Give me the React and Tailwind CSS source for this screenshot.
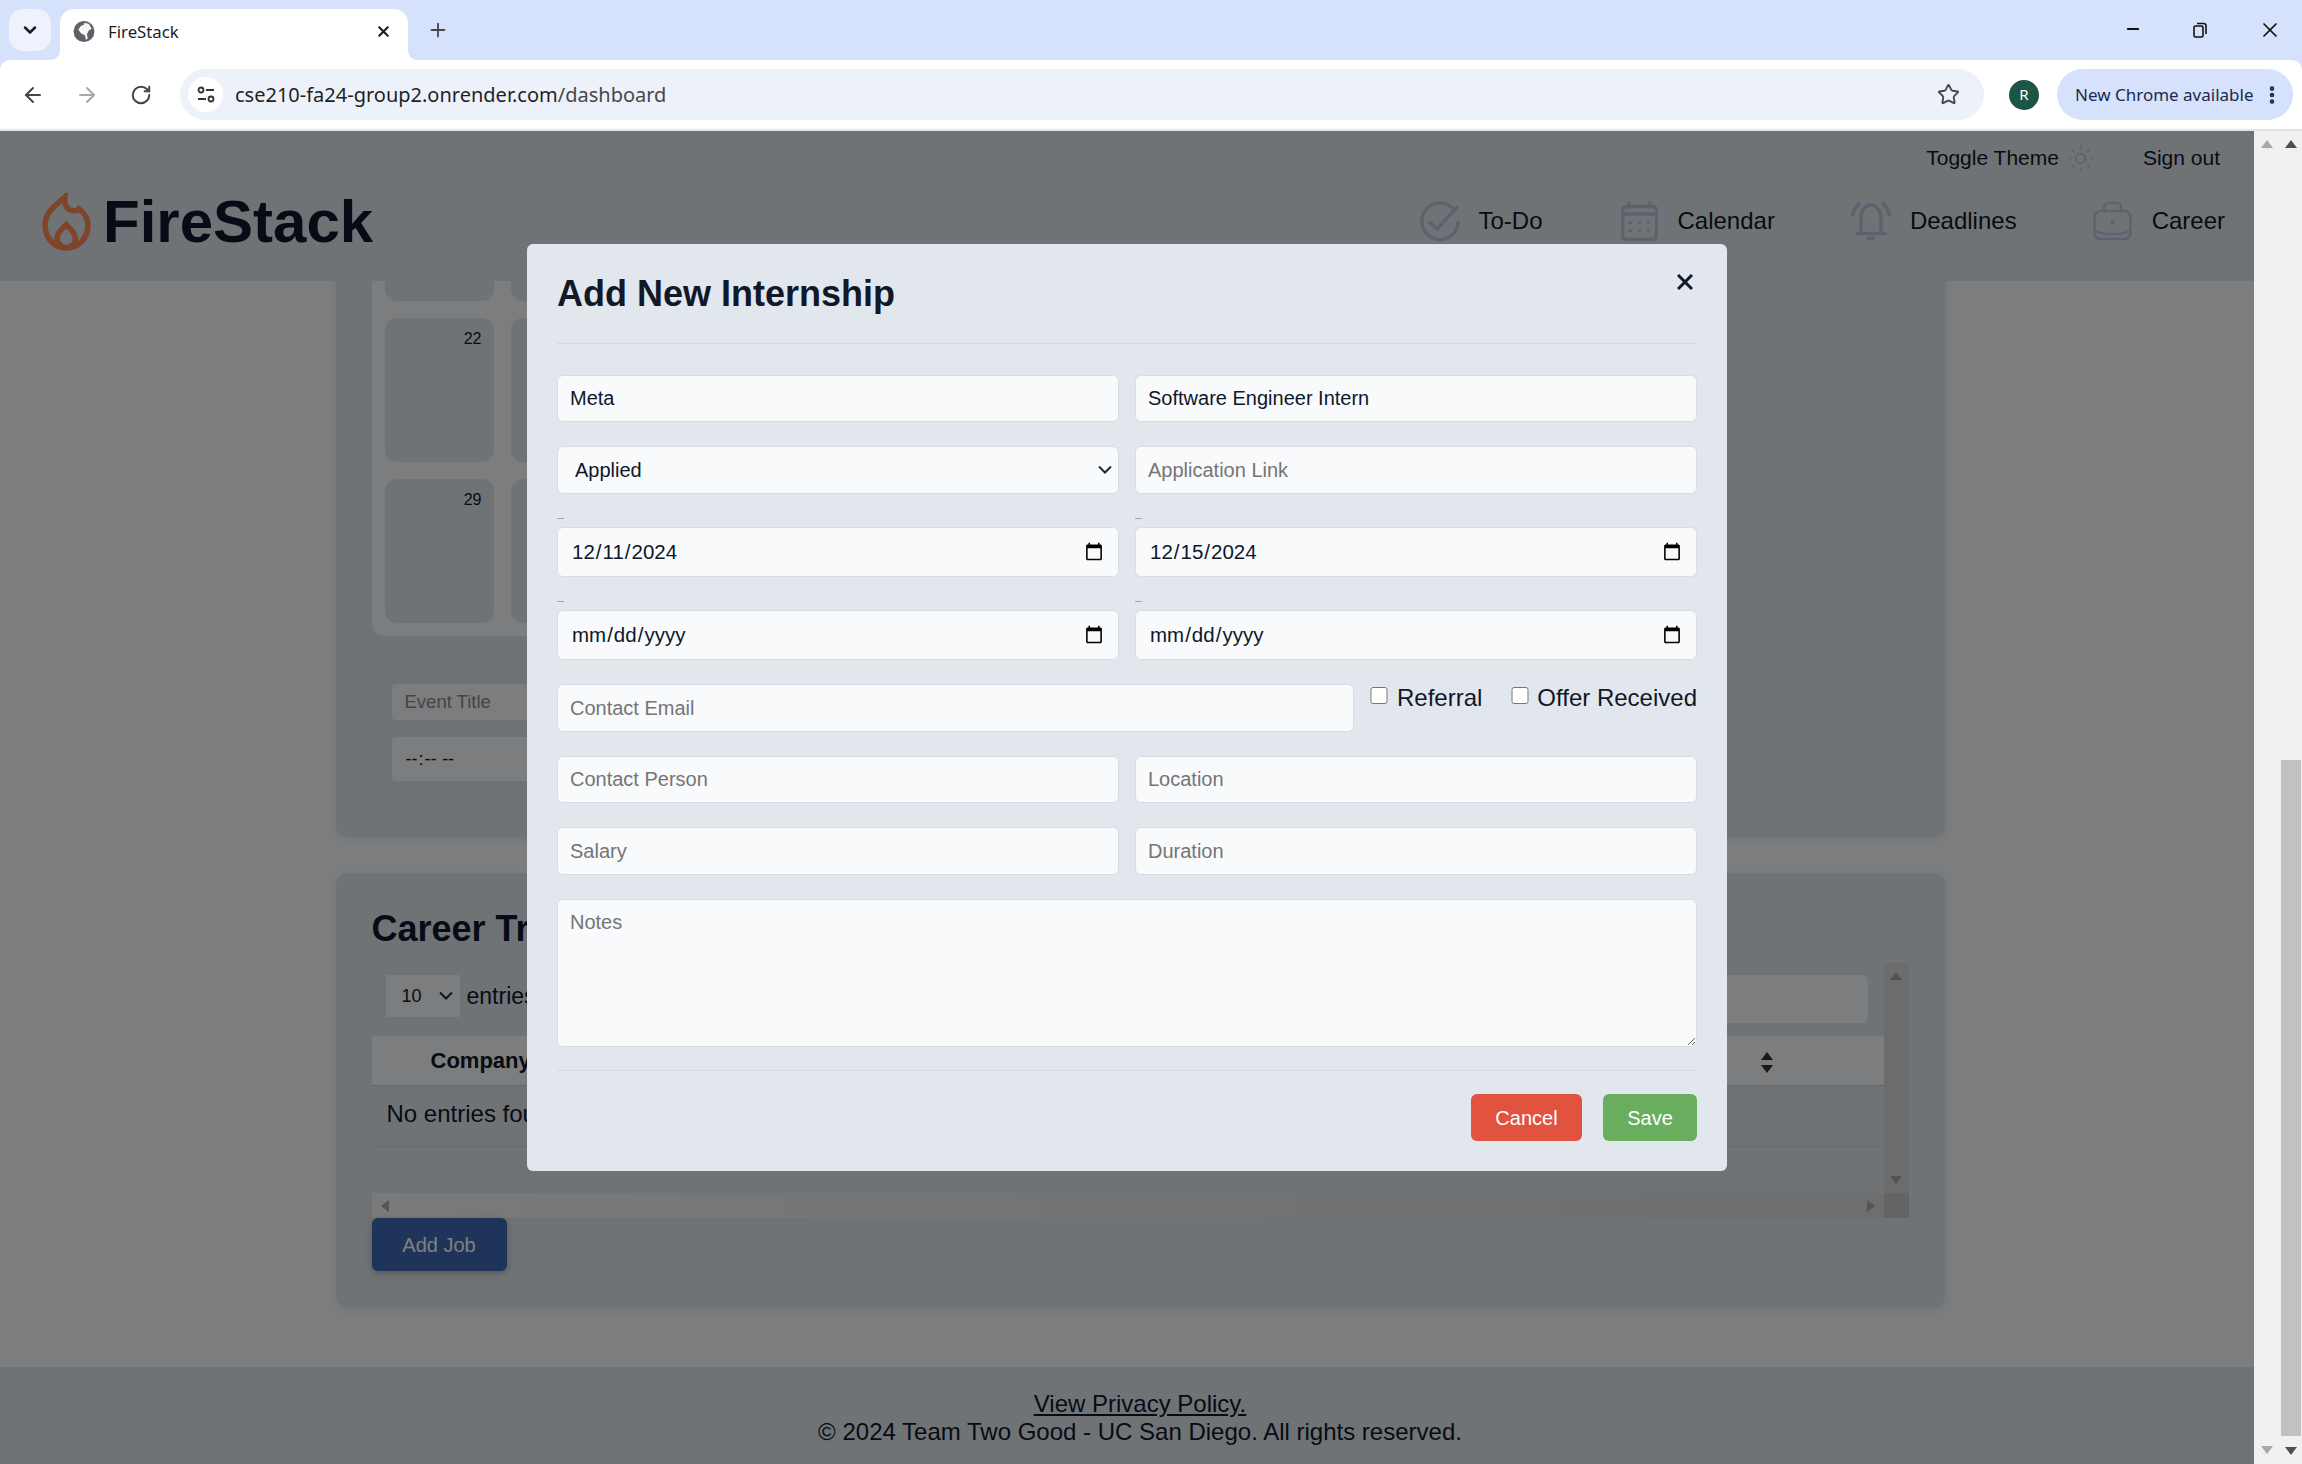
import React from 'react';
import { ArrowLeft, ArrowRight, ChevronDown, EllipsisVertical, Minus, Plus, RotateCw, Star, Sun, X } from 'lucide-react';

const sans = 'font-["Liberation_Sans",Arial,sans-serif]';
const chromeFont = 'font-["Noto_Sans",sans-serif]';
const field =
  'w-full rounded-md border border-[#d9dde2] bg-[#f8fafc] px-3 text-[20px] text-[#0f172a] placeholder:text-[#757575] outline-none';
const dateField =
  'h-[50px] w-full rounded-md border border-[#d9dde2] bg-[#f8fafc] pl-[13px] pr-3 text-[20.5px] text-[#0f172a] outline-none';
const navIcon = 'fill-none stroke-[#b8c4dc]';

// Triangulo das barras de rolagem
const Arrow = ({ rotate = '', color = 'fill-[#5c5c5c]', size = 'w-3 h-2' }) => (
  <svg viewBox="0 0 12 8" className={`${size} ${rotate} ${color}`}>
    <path d="M6 0l6 8H0z" />
  </svg>
);

const SelectChevron = () => (
  <svg viewBox="0 0 14 9" className="pointer-events-none absolute right-[7px] top-1/2 h-[9px] w-[14px] -translate-y-1/2 fill-none stroke-[#1f2937] stroke-2">
    <path d="M1 1l6 6 6-6" />
  </svg>
);

const BrowserChrome = () => (
  <div className={`${chromeFont} bg-[#d6e2fb]`}>
    {/* Abas */}
    <div className="flex h-[60px] items-start pt-[9px] pl-[9px]">
      <div className="flex h-[42px] w-[42px] items-center justify-center rounded-[14px] bg-[#edf2fc]">
        <ChevronDown size={20} strokeWidth={3} className="text-[#1f1f1f]" />
      </div>
      <div className="relative ml-[9px] flex h-[51px] w-[348px] items-center rounded-t-[14px] bg-white pb-[6px] pl-[13px] pr-[16px]">
        <svg viewBox="0 0 10 10" className="absolute bottom-0 left-[-10px] h-[10px] w-[10px] fill-white">
          <path d="M10 0v10H0c6 0 10-4 10-10z" />
        </svg>
        <svg viewBox="0 0 10 10" className="absolute bottom-0 right-[-10px] h-[10px] w-[10px] fill-white">
          <path d="M0 0v10h10C4 10 0 6 0 0z" />
        </svg>
        <svg viewBox="0 0 22 22" className="h-[21px] w-[22px]">
          <circle cx="11" cy="11" r="11" fill="#5f6368" />
          <path d="M11 2l5 1 3 5-3 2-2 4 1 4-2 2-1-5-4-2-3-4 3-4 3-1z" fill="#fff" opacity="0.95" />
        </svg>
        <span className="ml-[13px] text-[16.8px] text-[#1f1f1f]">FireStack</span>
        <X size={17} strokeWidth={3} className="ml-auto text-[#1f1f1f]" />
      </div>
      <Plus size={22} strokeWidth={2} className="ml-[19px] mt-[10px] text-[#444746]" />
      <div className="ml-auto flex items-start text-[#111]">
        <Minus size={18} strokeWidth={2.5} className="mr-[50px] mt-[11px]" />
        <svg viewBox="0 0 16 16" className="mr-[50px] mt-[13px] h-[16px] w-[16px] fill-none stroke-[#111] stroke-[1.6]">
          <rect x="2" y="4" width="9" height="11" rx="1.5" />
          <path d="M5 1.500h6.500A2.500 2.500 0 0 1 14 4v8" />
        </svg>
        <X size={24} strokeWidth={1.7} className="mr-[20px] mt-[9px]" />
      </div>
    </div>
    {/* Barra de endereco */}
    <div className="flex h-[69px] items-center rounded-t-[10px] bg-white pl-[6px]">
      <div className="flex w-[54px] justify-center">
        <ArrowLeft size={24} strokeWidth={2} className="text-[#474747]" />
      </div>
      <div className="flex w-[54px] justify-center">
        <ArrowRight size={24} strokeWidth={2} className="text-[#a8a8a8]" />
      </div>
      <div className="flex w-[54px] justify-center">
        <RotateCw size={22} strokeWidth={2.2} className="text-[#474747]" />
      </div>
      <div className="ml-[12px] flex h-[51px] w-[1804px] items-center rounded-full bg-[#edf2fa] pl-[8px] pr-[24px]">
        <div className="flex h-[35px] w-[35px] items-center justify-center rounded-full bg-white">
          <svg viewBox="0 0 20 20" className="h-[20px] w-[20px] fill-none stroke-[#333] stroke-[1.8]">
            <circle cx="5" cy="5" r="2.500" />
            <path d="M10 5h8M2 14h8" />
            <circle cx="15" cy="14" r="2.500" />
          </svg>
        </div>
        <span className="ml-[12px] text-[20px] text-[#1f1f1f]">
          cse210-fa24-group2.onrender.com<span className="text-[#474747]">/dashboard</span>
        </span>
        <Star size={23} strokeWidth={2} className="ml-auto text-[#474747]" />
      </div>
      <div className="ml-[25px] flex h-[30px] w-[30px] items-center justify-center rounded-full bg-[#1c5445] text-[15px] text-white">
        R
      </div>
      <div className="ml-[18px] flex h-[51px] w-[236px] items-center rounded-full bg-[#d6e2fb] pl-[18px] text-[17px] text-[#1b2a4e]">
        <span className="whitespace-nowrap">New Chrome available</span>
        <EllipsisVertical size={22} strokeWidth={3} className="ml-auto mr-[10px]" />
      </div>
    </div>
    <div className="h-[2px] bg-[#e4e4e4]" />
  </div>
);

const SiteHeader = () => (
  <header className="flex h-[150px] shrink-0 justify-between bg-[#e0e6ec] pl-[42px] pr-[55px]">
    <div className="flex items-start pt-[62px]">
      <svg viewBox="36 24 146 176" className="h-[58px] w-[49px] fill-none stroke-[#fc8a54] stroke-[17]">
        <path d="M104 36C80 60 44 78 44 122c0 40 28 68 64 68 38 0 66-28 66-68 0-22-14-40-28-50-6 8-22 8-32 0-10-10-12-22-10-36z" />
        <path d="M108 120c12 12 28 26 28 42 0 16-14 28-28 28s-28-12-28-28c0-16 16-30 28-42z" />
      </svg>
      <span className="ml-[12px] text-[60px] font-bold leading-[58px] text-[#0f172a]">FireStack</span>
    </div>
    <div className="flex flex-col items-end">
      <div className="mr-[5px] mt-[13px] flex h-[28px] items-center text-[21px] text-[#0f172a]">
        <span>Toggle Theme</span>
        <Sun size={29} strokeWidth={1.5} className="ml-[7px] text-[#b8c4dc]" />
        <span className="ml-[48px]">Sign out</span>
      </div>
      <nav className="mt-[29px] flex items-center text-[24px] leading-[40px] text-[#0f172a]">
        <div className="flex items-center gap-[18px]">
          <svg viewBox="0 0 40 40" className={`h-[40px] w-[40px] stroke-[3.5] ${navIcon}`}>
            <path d="M33 7.500A18.200 18.200 0 1 0 38.200 20" />
            <path d="M9 20.500l8 7.500L38 5" />
          </svg>
          <span>To-Do</span>
        </div>
        <div className="ml-[78px] flex items-center gap-[20px]">
          <svg viewBox="0 0 37 40" className={`h-[40px] w-[37px] stroke-[3.5] ${navIcon}`}>
            <rect x="1.500" y="5.500" width="34" height="33" rx="4" />
            <path d="M1.500 13h34M8 0.500v7M28.500 0.500v7" />
            <g className="fill-[#b8c4dc] stroke-none">
              <circle cx="9.300" cy="21.600" r="1.700" />
              <circle cx="18.500" cy="21.600" r="1.700" />
              <circle cx="27" cy="21.600" r="1.700" />
              <circle cx="9.300" cy="29.600" r="1.700" />
              <circle cx="18.500" cy="29.600" r="1.700" />
              <circle cx="27" cy="29.600" r="1.700" />
            </g>
          </svg>
          <span>Calendar</span>
        </div>
        <div className="ml-[76px] flex items-center gap-[19px]">
          <svg viewBox="0 0 40 40" className={`h-[40px] w-[40px] stroke-[3.5] ${navIcon}`}>
            <path d="M10 32V16c0-7 5-12 10-12s10 5 10 12v16" />
            <path d="M4.500 32.500H36" />
            <path d="M16 37.500h8" />
            <path d="M1.500 15C2 10 5 5 9 2M38.500 15C38 10 35 5 31 2" />
          </svg>
          <span>Deadlines</span>
        </div>
        <div className="ml-[76px] flex items-center gap-[20px]">
          <svg viewBox="0 0 39 40" className={`h-[40px] w-[39px] stroke-[2.5] ${navIcon}`}>
            <rect x="1.500" y="10" width="36" height="28" rx="6" />
            <path d="M11 10V6a4 4 0 0 1 4-4h9a4 4 0 0 1 4 4v4" />
            <path d="M2 30c4 2 8 3 17.500 3S33 32 37 30" />
            <circle cx="19.500" cy="21" r="1" className="fill-[#b8c4dc]" />
          </svg>
          <span>Career</span>
        </div>
      </nav>
    </div>
  </header>
);

const CalendarCard = () => (
  <section className="mx-auto w-[1609px] shrink-0 rounded-xl bg-[#e0e6ec] px-[36px] pb-[37px] shadow-[0_2px_8px_rgba(0,0,0,0.08)]">
    <div className="w-[891px] rounded-xl bg-[#f8fafc] p-[13px]">
      <div className="grid grid-cols-[repeat(7,109px)] gap-[17px]">
        {[15, 16, 17, 18, 19, 20, 21, 22, 23, 24, 25, 26, 27, 28, 29, 30].map((day) => (
          <div key={day} className="h-[144px] rounded-xl bg-[#e0e6ec] pr-3 pt-[9px] text-right text-[16px] text-[#0f172a]">
            {day >= 22 && day}
          </div>
        ))}
      </div>
    </div>
    <div className="mt-[22px] flex w-[891px] flex-col gap-[17px] rounded-xl bg-[#dfe5eb] px-[20px] pb-[19px] pt-[26px]">
      <input className="h-[36px] w-[500px] rounded bg-[#f8fafc] px-[13px] text-[18.500px] placeholder:text-[#8a8a8a]" placeholder="Event Title" />
      <input type="time" className="h-[44px] w-[500px] rounded bg-[#f8fafc] px-[13px] text-[18px] text-[#0f172a]" />
    </div>
  </section>
);

const CareerCard = () => (
  <section className="mx-auto mt-[36px] w-[1609px] shrink-0 rounded-xl bg-[#e0e6ec] px-[36px] pb-[37px] pt-[36px] shadow-[0_2px_8px_rgba(0,0,0,0.08)]">
    <h2 className="text-[36px] font-bold leading-[40px] text-[#0f172a]">Career Tracker</h2>
    <div className="mt-[14px] flex w-[1537px]">
      <div className="flex h-[230px] w-[1512px] flex-col">
        <div className="flex h-[73px] items-start justify-between pl-[14px] pr-[16px] pt-[12px]">
          <div className="flex items-center text-[23px] text-[#0f172a]">
            <div className="relative h-[42px] w-[74px]">
              <select className="h-full w-full appearance-none bg-[#f8fafc] pl-[16px] text-[18px]">
                <option>10</option>
              </select>
              <SelectChevron />
            </div>
            <span className="ml-[7px]">entries per page</span>
          </div>
          <input className="h-[48px] w-[500px] rounded-md bg-[#f8fafc]" />
        </div>
        <div className="flex h-[50px] items-center border-b border-[#c8ccd2] bg-[#f8fafc] text-[22px] font-bold text-[#0f172a]">
          <span className="pl-[59px]">Company</span>
          <div className="ml-auto mr-[111px] mt-[4px] flex flex-col gap-[5px]">
            <Arrow color="fill-[#333]" />
            <Arrow color="fill-[#333]" rotate="rotate-180" />
          </div>
        </div>
        <div className="flex h-[61px] items-center border-b border-[#ccd2da] pb-[5px] pl-[15px] text-[24px] text-[#0f172a]">
          No entries found
        </div>
      </div>
      <div className="flex h-[230px] w-[25px] flex-col items-center justify-between bg-[#d8d8d8] py-[9px]">
        <Arrow color="fill-[#a8a8a8]" />
        <Arrow color="fill-[#a8a8a8]" rotate="rotate-180" />
      </div>
    </div>
    <div className="flex h-[25px] w-[1537px]">
      <div className="flex w-[1512px] items-center justify-between bg-linear-to-r from-[#f4f4f4] to-[#dcdcdc] px-[7px]">
        <Arrow color="fill-[#a8a8a8]" rotate="-rotate-90" />
        <Arrow color="fill-[#a8a8a8]" rotate="rotate-90" />
      </div>
      <div className="w-[25px] bg-[#c8c8c8]" />
    </div>
    <button className="h-[53px] w-[135px] rounded-md bg-[#3c68b0] text-[20px] text-white shadow-[0_2px_6px_rgba(0,0,0,0.25)]">
      Add Job
    </button>
  </section>
);

const Footer = () => (
  <footer className="h-[97px] shrink-0 bg-[#e0e6ec] pt-[23px] text-center text-[24px] leading-[28px] text-[#0f172a]">
    <a className="underline">View Privacy Policy.</a>
    <p>© 2024 Team Two Good - UC San Diego. All rights reserved.</p>
  </footer>
);

const DateLabel = () => <div className="mb-[8px] h-px w-[7px] bg-[#a4a8ae]" />;

const InternshipModal = () => (
  <div className="flex h-[927px] w-[1200px] flex-col rounded-md bg-[#e2e7ee] px-[30px] pb-[30px]">
    <div className="flex h-[100px] justify-between border-b border-[#d5dae1] pt-[26px]">
      <h2 className="text-[36px] font-bold leading-[48px] text-[#111827]">Add New Internship</h2>
      <svg viewBox="0 0 16 16" className="mr-[4px] mt-[4px] h-[16px] w-[16px] stroke-[#111827] stroke-[3]">
        <path d="M1 1l14 14M15 1L1 15" />
      </svg>
    </div>
    <div className="mt-[31px] flex flex-col gap-6">
      <div className="grid grid-cols-2 gap-x-4">
        <input className={`${field} h-[47px]`} defaultValue="Meta" />
        <input className={`${field} h-[47px]`} defaultValue="Software Engineer Intern" />
      </div>
      <div className="grid grid-cols-2 gap-x-4">
        <div className="relative">
          <select className={`${field} h-[48px] appearance-none pl-[17px]`} defaultValue="Applied">
            <option>Applied</option>
          </select>
          <SelectChevron />
        </div>
        <input className={`${field} h-[48px]`} placeholder="Application Link" />
      </div>
      <div className="grid grid-cols-2 gap-x-4">
        <div>
          <DateLabel />
          <input type="date" className={dateField} defaultValue="2024-12-11" />
        </div>
        <div>
          <DateLabel />
          <input type="date" className={dateField} defaultValue="2024-12-15" />
        </div>
      </div>
      <div className="grid grid-cols-2 gap-x-4">
        <div>
          <DateLabel />
          <input type="date" className={dateField} />
        </div>
        <div>
          <DateLabel />
          <input type="date" className={dateField} />
        </div>
      </div>
      <div className="flex gap-4">
        <input className={`${field} h-[48px] w-[797px]! shrink-0`} placeholder="Contact Email" />
        <div className="flex flex-1 items-start justify-between text-[24px] leading-[28px] text-[#111827]">
          <label className="flex items-start gap-[9px]">
            <input type="checkbox" className="mt-[3px] h-[17px] w-[18px]" />
            Referral
          </label>
          <label className="flex items-start gap-[8px]">
            <input type="checkbox" className="mt-[3px] h-[17px] w-[18px]" />
            Offer Received
          </label>
        </div>
      </div>
      <div className="grid grid-cols-2 gap-x-4">
        <input className={`${field} h-[47px]`} placeholder="Contact Person" />
        <input className={`${field} h-[47px]`} placeholder="Location" />
      </div>
      <div className="grid grid-cols-2 gap-x-4">
        <input className={`${field} h-[48px]`} placeholder="Salary" />
        <input className={`${field} h-[48px]`} placeholder="Duration" />
      </div>
      <textarea className={`${field} block h-[148px] py-[7px]`} placeholder="Notes" />
    </div>
    <div className="mt-[23px] flex justify-end gap-[21px] border-t border-[#d5dae1] pt-[23px] text-[20px] text-white">
      <button className="h-[47px] w-[111px] rounded-md bg-[#e2533f]">Cancel</button>
      <button className="h-[47px] w-[94px] rounded-md bg-[#69ae5e]">Save</button>
    </div>
  </div>
);

export default function App() {
  return (
    <div className={`${sans} flex h-[1464px] w-[2302px] flex-col overflow-hidden`}>
      <BrowserChrome />
      <div className="flex min-h-0 flex-1">
        {/* Pagina escurecida pelo modal */}
        <div className="relative w-[2254px] overflow-hidden">
          <div className="flex h-full w-[2280px] flex-col bg-[#f8fafc]">
            <SiteHeader />
            <main className="flex min-h-0 flex-1 flex-col justify-end overflow-hidden pb-[59px]">
              <CalendarCard />
              <CareerCard />
            </main>
            <Footer />
          </div>
          <div className="absolute inset-0 flex justify-center bg-black/50 pt-[113px]">
            <InternshipModal />
          </div>
        </div>
        {/* Barras de rolagem da janela */}
        <div className="flex w-[26px] flex-col items-center justify-between bg-[#f1f1f1] pb-[10px] pt-[9px]">
          <Arrow color="fill-[#a8a8a8]" />
          <Arrow color="fill-[#a8a8a8]" rotate="rotate-180" />
        </div>
        <div className="flex w-[22px] flex-col items-center bg-[#f1f1f1] pt-[9px]">
          <Arrow color="fill-[#505050]" />
          <div className="mt-auto h-[676px] w-[20px] bg-[#c1c1c1]" />
          <div className="flex h-[28px] items-center pt-[2px]">
            <Arrow color="fill-[#505050]" rotate="rotate-180" />
          </div>
        </div>
      </div>
    </div>
  );
}
